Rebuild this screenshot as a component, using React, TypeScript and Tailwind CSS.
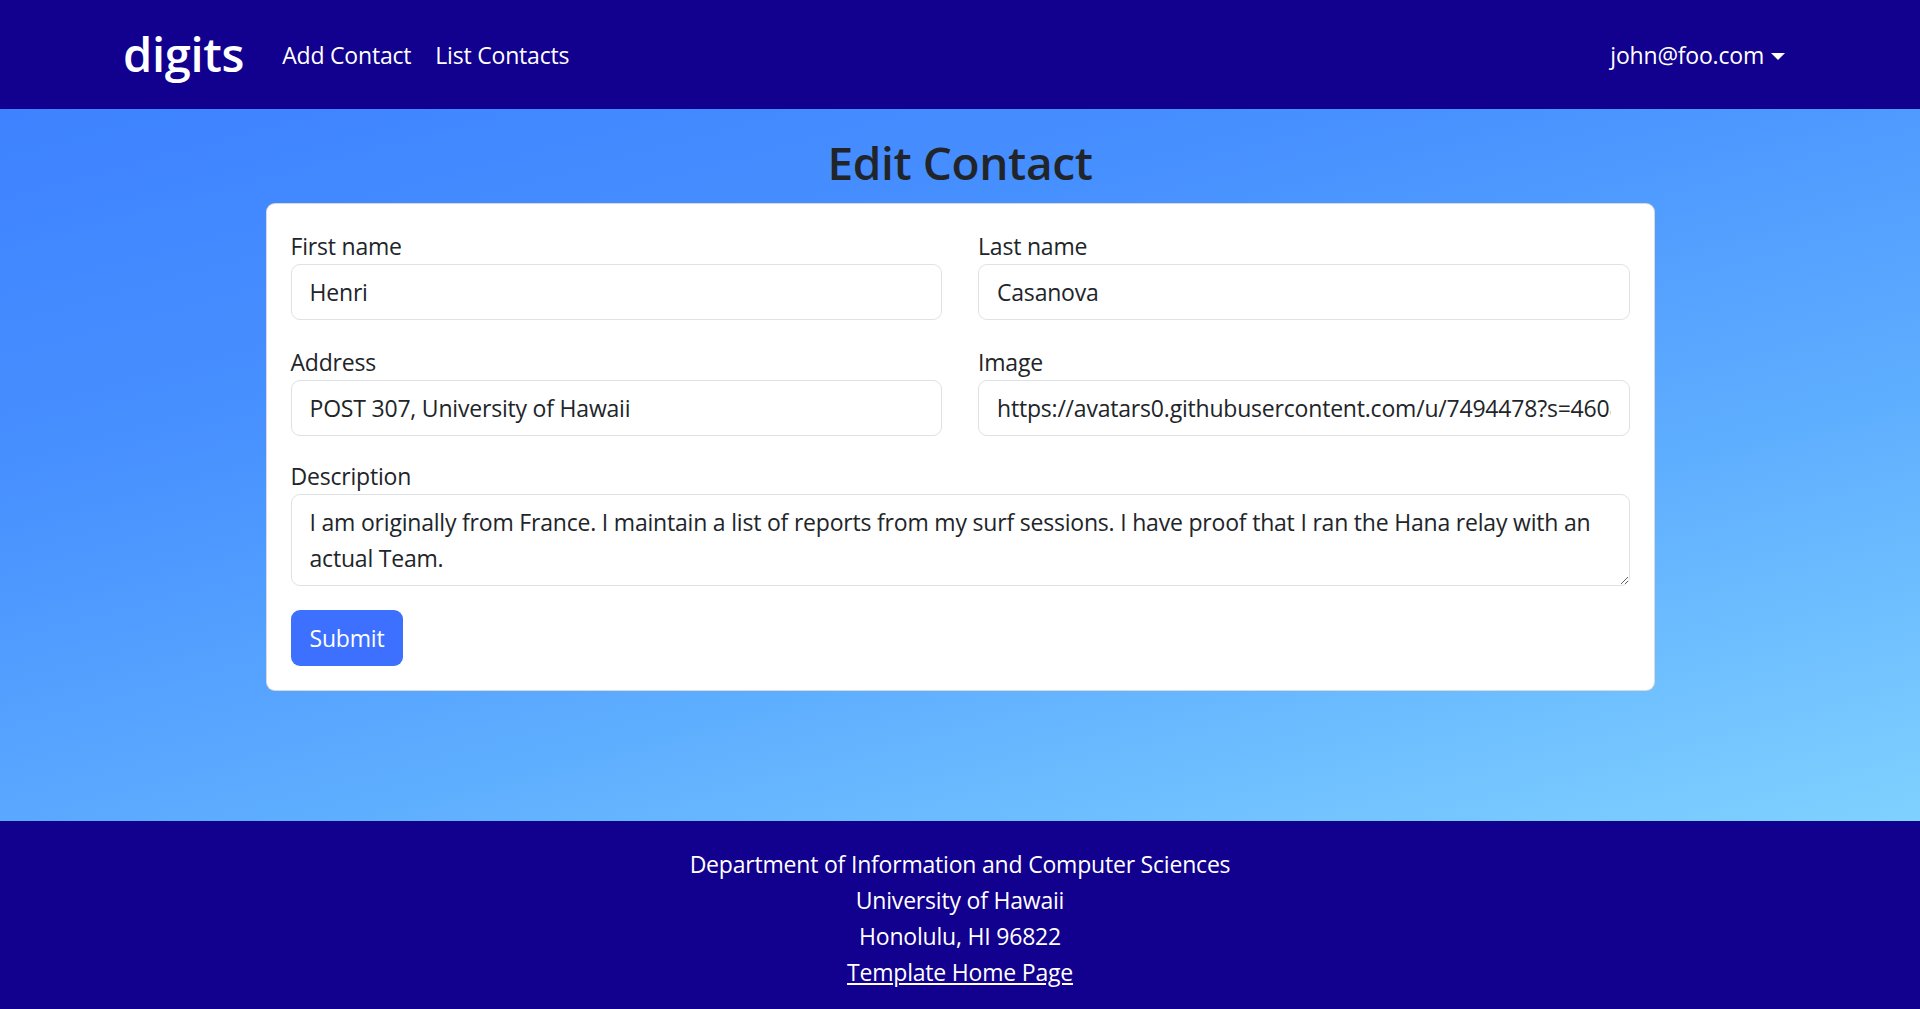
import React from 'react';

const font = { fontFamily: '"Open Sans", "Noto Sans", sans-serif' };

interface FieldProps {
  label: string;
  value: string;
}

const Field: React.FC<FieldProps> = ({ label, value }) => (
  <div className="flex flex-col">
    <label className="h-[36px] text-[23px] leading-[36px] tracking-[-0.2px] text-[#212529]">{label}</label>
    <input
      type="text"
      defaultValue={value}
      className="h-[56px] w-full rounded-[9px] border border-[#dee2e6] bg-white px-[18px] text-[23px] leading-[36px] tracking-[-0.2px] text-[#212529] outline-none"
    />
  </div>
);

export default function App() {
  return (
    <div className="flex min-h-[1009px] flex-col" style={font}>
      {/* Navbar */}
      <nav className="h-[109px] bg-[#12008f] text-white">
        <div className="mx-auto flex h-full w-[1710px] items-center px-[18px]">
          <span className="mr-[26px] text-[47px] font-semibold leading-none tracking-[-0.3px]">digits</span>
          <a className="mt-[2px] px-[12px] text-[23px] tracking-[-0.2px]">Add Contact</a>
          <a className="mt-[2px] px-[12px] text-[23px] tracking-[-0.2px]">List Contacts</a>
          <div className="ml-auto mt-[2px] flex items-center px-[12px] text-[23px] tracking-[-0.2px]">
            john@foo.com
            <span className="ml-[7px] mt-[2px] h-0 w-0 border-x-[7px] border-t-[7px] border-x-transparent border-t-white" />
          </div>
        </div>
      </nav>

      {/* Main */}
      <main className="flex-1 bg-[linear-gradient(165deg,#3e82ff_0%,#4790ff_30%,#5eaeff_65%,#7fd1ff_100%)]">
        <div className="mx-auto w-[1389px]">
          <h2 className="mb-[12px] mt-[25px] text-center text-[46px] font-semibold leading-[57px] tracking-[-0.4px] text-[#212529]">
            Edit Contact
          </h2>
          <div className="rounded-[9px] border border-black/15 bg-white p-[24px]">
            <div className="grid grid-cols-2 gap-x-[36px] gap-y-[24px]">
              <Field label="First name" value="Henri" />
              <Field label="Last name" value="Casanova" />
              <Field label="Address" value="POST 307, University of Hawaii" />
              <Field label="Image" value="https://avatars0.githubusercontent.com/u/7494478?s=460&v=4" />
            </div>
            <div className="mt-[22px] flex flex-col">
              <label className="h-[36px] text-[23px] leading-[36px] tracking-[-0.2px] text-[#212529]">Description</label>
              <textarea
                rows={2}
                defaultValue="I am originally from France. I maintain a list of reports from my surf sessions. I have proof that I ran the Hana relay with an actual Team."
                className="h-[92px] w-full rounded-[9px] border border-[#dee2e6] bg-white px-[18px] py-[9px] text-[23px] leading-[36px] tracking-[-0.2px] text-[#212529] outline-none"
              />
            </div>
            <button className="mt-[24px] h-[56px] rounded-[9px] bg-[#3d70ff] px-[19px] text-[23px] tracking-[-0.2px] text-white">
              Submit
            </button>
          </div>
        </div>
      </main>

      {/* Footer */}
      <footer className="bg-[#12008f] pb-[19px] pt-[25px] text-center text-[23px] leading-[36px] tracking-[-0.2px] text-white">
        <div>Department of Information and Computer Sciences</div>
        <div>University of Hawaii</div>
        <div>Honolulu, HI 96822</div>
        <a className="underline">Template Home Page</a>
      </footer>
    </div>
  );
}
